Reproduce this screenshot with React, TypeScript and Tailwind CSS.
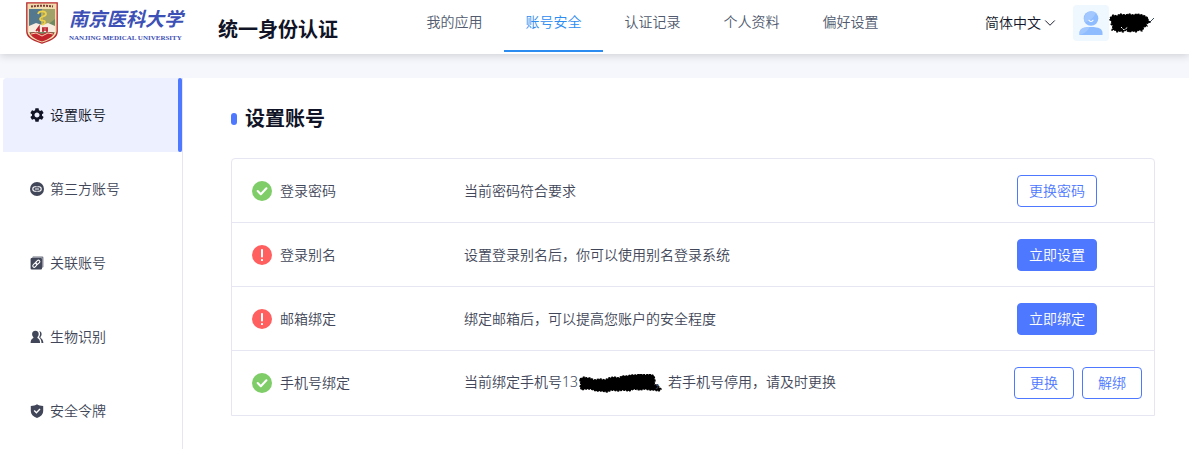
import type { ReactNode } from 'react';
import { ChevronDown } from 'lucide-react';
import { MdSettings } from 'react-icons/md';

const LinkCircleIcon = () => (
  <svg viewBox="0 0 14 14" className="size-[14px]" aria-hidden="true">
    <circle cx="7" cy="7" r="7" fill="currentColor" />
    <g fill="none" stroke="#fff" strokeWidth="1.1" strokeLinecap="round">
      <path d="M6.3 4.8H5a2.2 2.2 0 0 0 0 4.4h1.3" />
      <path d="M7.7 4.8H9a2.2 2.2 0 0 1 0 4.4H7.7" />
      <path d="M5.4 7h3.2" />
    </g>
  </svg>
);

const LinkSquareIcon = () => (
  <svg viewBox="0 0 14 14" className="size-[14px]" aria-hidden="true">
    <path d="M3 .6h9.4a1 1 0 0 1 1 1V11l-1.2 1V1.8H1.8z" fill="currentColor" opacity=".75" />
    <rect x=".6" y="2" width="11.4" height="11.4" rx="1" fill="currentColor" />
    <g fill="none" stroke="#fff" strokeWidth="1.1" transform="rotate(-45 6.3 7.7)">
      <rect x="1.9" y="6.3" width="4.8" height="2.8" rx="1.4" />
      <rect x="5.9" y="6.3" width="4.8" height="2.8" rx="1.4" />
    </g>
  </svg>
);

const PeopleIcon = () => (
  <svg viewBox="0 0 14 14" className="size-[14px]" aria-hidden="true">
    <path
      d="M5.4.7C7.6.7 8.7 2.2 8.7 4c0 1.5-.6 2.5-1.3 3.2v.9c1.7.7 2.7 2.4 2.7 5H.6c0-2.6 1-4.3 2.8-5v-.9C2.7 6.5 2.1 5.5 2.1 4 2.1 2.2 3.2.7 5.4.7z"
      fill="currentColor"
    />
    <path
      d="M9.2 1c1.6.3 2.4 1.6 2.4 3.1 0 1.3-.5 2.2-1.1 2.9v.7c1.7 1 2.7 2.8 2.9 5.4h-1.900c-.1-2.5-.8-4.2-2.3-5.5V6.700c.6-.8.9-1.7.9-2.8 0-1.1-.3-2.1-.9-2.9z"
      fill="currentColor"
    />
  </svg>
);

const ShieldIcon = () => (
  <svg viewBox="0 0 14 14" className="size-[14px]" aria-hidden="true">
    <path d="M7 .2C8.5 1.3 10.6 1.9 13.2 1.9v5c0 3.3-2.3 5.7-6.2 7C3.1 12.6.8 10.2.8 6.900v-5C3.4 1.9 5.5 1.3 7 .2z" fill="currentColor" />
    <path d="M4.2 6.5 6.4 8.7 10 5" fill="none" stroke="#fff" strokeWidth="1.4" />
  </svg>
);

const StatusIcon = ({ ok }: { ok: boolean }) => (
  <svg viewBox="0 0 20 20" className="size-5 shrink-0" role="img" aria-label={ok ? '正常' : '待设置'}>
    <circle cx="10" cy="10" r="10" fill={ok ? '#7fcd68' : '#ff5f5f'} />
    {ok ? (
      <path d="m5.7 10.1 3.100 3.100 5.600-5.900" fill="none" stroke="#fff" strokeWidth="2.1" strokeLinecap="round" strokeLinejoin="round" />
    ) : (
      <>
        <rect x="9" y="4" width="2" height="8.5" rx=".8" fill="#fff" />
        <rect x="9" y="14" width="2" height="2" rx=".6" fill="#fff" />
      </>
    )}
  </svg>
);

const Crest = () => (
  <svg viewBox="0 0 32 42" className="h-[42px] w-8 shrink-0" aria-hidden="true">
    <path d="M.8.8h30.4v28.400c0 4.800-3.200 8.300-15.200 12-12-3.700-15.200-7.200-15.200-12z" fill="#f0ddb0" stroke="#ba2b2f" strokeWidth="1.3" />
    <path d="M3 7h26v21c0 5-5 8-13 11C8 36 3 33 3 28z" fill="#718963" />
    <path d="M3 7h13v20H3z" fill="#54798e" />
    <path d="M16 7h13v10L16 27z" fill="#a1a26a" />
    <path d="M5 4.500c7-1 15-1 22 0" fill="none" stroke="#7c3c36" strokeWidth="2" strokeDasharray="2 1" />
    <path d="M3 24l7-3 6 2 6-2 7 3v6H3z" fill="#f8ebdf" />
    <path d="M4 31c6-2 9 0 12 1 3-1 6-3 12-1-1.500 4-6 6.500-12 8.500C10 37.500 5.500 35 4 31z" fill="#c3252d" />
    <path d="M16 9v14" stroke="#d5b838" strokeWidth="1.5" />
    <path d="M12 12c1-4 8-3 8 0s-6 2-6 5 5 0 5 3-2 2-3 3" fill="none" stroke="#efd14a" strokeWidth="1.7" />
    <path d="M10 29l3-4v5m-3-2h4m2-2h6m-5 0v4m4-4v4m-5-2h6" fill="none" stroke="#b92731" strokeWidth="1.6" />
    <path d="M5 32l5-1 6 3 6-3 5 1" fill="none" stroke="#f2cfae" />
  </svg>
);

const Avatar = () => (
  <span className="flex size-9 items-center justify-center rounded bg-[#eff7ff]">
    <svg viewBox="0 0 24 24" className="size-6" aria-hidden="true">
      <circle cx="12" cy="7.5" r="7.3" fill="#8fbcff" />
      <path d="M5.5 11C4 6 7 1 12 .2c2.500 0 4 .8 5 1.800-3 5-6.500 8.500-11.500 9z" fill="#a3c8ff" />
      <path d="M10 9.300c.8 1.500 3.200 1.500 4 0" fill="none" stroke="#fff" strokeWidth="1.1" strokeLinecap="round" />
      <path d="M.5 24v-2c0-4 3.500-6 11.500-6s11.500 2 11.500 6v2z" fill="#8fbcff" />
      <path d="M.5 24v-2c0-4 3.500-6 10-6C9.500 19 6 22.500.5 24z" fill="#a3c8ff" />
    </svg>
  </span>
);

const navItems = ['我的应用', '账号安全', '认证记录', '个人资料', '偏好设置'];

const sideItems: { label: string; icon: ReactNode }[] = [
  { label: '设置账号', icon: <MdSettings viewBox="2 2 20 20" className="size-[14px]" /> },
  { label: '第三方账号', icon: <LinkCircleIcon /> },
  { label: '关联账号', icon: <LinkSquareIcon /> },
  { label: '生物识别', icon: <PeopleIcon /> },
  { label: '安全令牌', icon: <ShieldIcon /> },
];

const HiddenPhone = () => (
  <svg viewBox="0 0 84 20" className="-mr-2 inline-block h-5 w-[84px] align-middle" aria-hidden="true">
    <path
      d="M2 5l4-2 3 1 3 0 4 2 6-1 5 1 4-2 5-1 5 1 3-2 5 0 4-1 5 0 4-1 6 1 4-1 4 2 1 5-1 3 4 2 3 3-2 2-5-1-4 0-5-1-5 1-6-1-5 2-6-1-5 1-6-1-5 2-6-1-5 0-5-2-6 0-3 1-2-3 1-3-1-3z"
      fill="#000" stroke="#000" strokeWidth="1.5" strokeDasharray="2 1"
    />
  </svg>
);

type Action = { label: string; primary?: boolean };

const rows: { name: string; ok: boolean; text: ReactNode; actions: Action[] }[] = [
  { name: '登录密码', ok: true, text: '当前密码符合要求', actions: [{ label: '更换密码' }] },
  { name: '登录别名', ok: false, text: '设置登录别名后，你可以使用别名登录系统', actions: [{ label: '立即设置', primary: true }] },
  { name: '邮箱绑定', ok: false, text: '绑定邮箱后，可以提高您账户的安全程度', actions: [{ label: '立即绑定', primary: true }] },
  {
    name: '手机号绑定',
    ok: true,
    text: <>当前绑定手机号13<HiddenPhone />，若手机号停用，请及时更换</>,
    actions: [{ label: '更换' }, { label: '解绑' }],
  },
];

function ActionButton({ label, primary, wide }: Action & { wide: boolean }) {
  const tone = primary ? 'bg-[#4e78ff] text-white' : 'bg-white text-[#4e78ff]';
  const width = wide ? 'w-20' : 'w-[60px]';
  return (
    <button type="button" className={`h-8 rounded border border-[#4e78ff] text-sm ${width} ${tone}`}>
      {label}
    </button>
  );
}

export default function App() {
  return (
    <div className="flex min-h-screen flex-col bg-[#f5f7fd] font-['Noto_Sans','Noto_Sans_CJK_SC',sans-serif] text-sm font-[350] text-[#414658]">
      <header className="z-10 flex h-[54px] items-start bg-white pr-[34px] pl-[26px] shadow-[0_2px_8px_rgba(0,0,0,0.15)]">
        <a href="#home" className="flex shrink-0 items-start gap-[11px] pt-0.5 whitespace-nowrap">
          <Crest />
          <span className="flex w-[115px] flex-col pt-1 text-[#3d50b5]">
            <span className="text-[19px] leading-[27px] font-bold italic">南京医科大学</span>
            <span className="font-['Liberation_Serif',serif] text-[7px] leading-[10px] font-bold">NANJING MEDICAL UNIVERSITY</span>
          </span>
        </a>
        <h1 className="ml-[34px] shrink-0 pt-4 text-xl leading-7 font-bold text-[#101426]">统一身份认证</h1>
        <nav className="ml-[67px] flex shrink-0">
          {navItems.map((item) => {
            const active = item === '账号安全';
            return (
              <a
                key={item}
                href={`#${item}`}
                aria-current={active ? 'page' : undefined}
                className={`h-[52px] w-[99px] border-b-2 text-center leading-[44px] ${
                  active ? 'border-[#2d8cf0] text-[#2d8cf0]' : 'border-transparent text-[#515a6e]'
                }`}
              >
                {item}
              </a>
            );
          })}
        </nav>
        <div className="ml-auto flex shrink-0 items-center gap-[14px] pt-[5px] text-[#101426]">
          <button type="button" className="flex items-center">
            简体中文
            <ChevronDown className="size-[18px]" strokeWidth={1.25} />
          </button>
          <button type="button" className="flex items-center" aria-label="用户菜单">
            <Avatar />
            <svg viewBox="0 0 46 20" className="h-5 w-[46px]" aria-hidden="true">
              <path d="M36 6l4 4 5-5" fill="none" stroke="#3c4a60" />
              <path
                d="M1 5l3-3 4 1 3-2 5 1 4-1 4 1 4-1 5 1 3 1 3 2 0 2 2 2-4 2 1 2-3 1-2 4-3-1-3 2-3-1-4 1-3-2-3 2-3-1-3 1-2-2-3 0 1-4-2-2 1-2-2-2z"
                fill="#000" stroke="#000" strokeWidth="1.3" strokeDasharray="2 1"
              />
              <path d="M12 14l3 3 4-3" fill="none" stroke="#fff" strokeDasharray="2 1" />
            </svg>
          </button>
        </div>
      </header>

      <div className="mt-6 flex flex-1 bg-white pl-[3px]">
        <aside className="w-[180px] shrink-0 border-r border-[#e5e6f1]">
          <nav>
            {sideItems.map(({ label, icon }, i) => (
              <a
                key={label}
                href={`#${label}`}
                className={`flex h-[74px] items-stretch justify-between pl-[27px] ${i === 0 ? 'rounded-tl bg-[#ecf0ff] text-[#101426]' : ''}`}
              >
                <span className="flex items-center gap-1.5">
                  {icon}
                  {label}
                </span>
                {i === 0 && <span className="w-1 rounded-sm bg-[#4e78ff]" />}
              </a>
            ))}
          </nav>
        </aside>

        <main className="min-w-0 flex-1 pt-[27px] pr-[34px] pl-12">
          <h2 className="mb-[25px] flex items-center gap-2 text-xl leading-7 font-bold text-[#101426]">
            <span className="h-3 w-1.5 rounded-full bg-[#4e78ff]" />
            设置账号
          </h2>
          <ul className="rounded-t border border-[#e5e6f1]">
            {rows.map((row) => (
              <li key={row.name} className="flex h-16 items-center border-b border-[#e5e6f1] pr-3 pl-5 last:border-b-0">
                <div className="flex w-[212px] shrink-0 items-center gap-2">
                  <StatusIcon ok={row.ok} />
                  {row.name}
                </div>
                <p className="min-w-0 flex-1">{row.text}</p>
                <div className={`flex w-32 shrink-0 gap-2 ${row.actions.length === 1 ? 'pl-[3px]' : ''}`}>
                  {row.actions.map((action) => (
                    <ActionButton key={action.label} {...action} wide={row.actions.length === 1} />
                  ))}
                </div>
              </li>
            ))}
          </ul>
        </main>
      </div>
    </div>
  );
}
